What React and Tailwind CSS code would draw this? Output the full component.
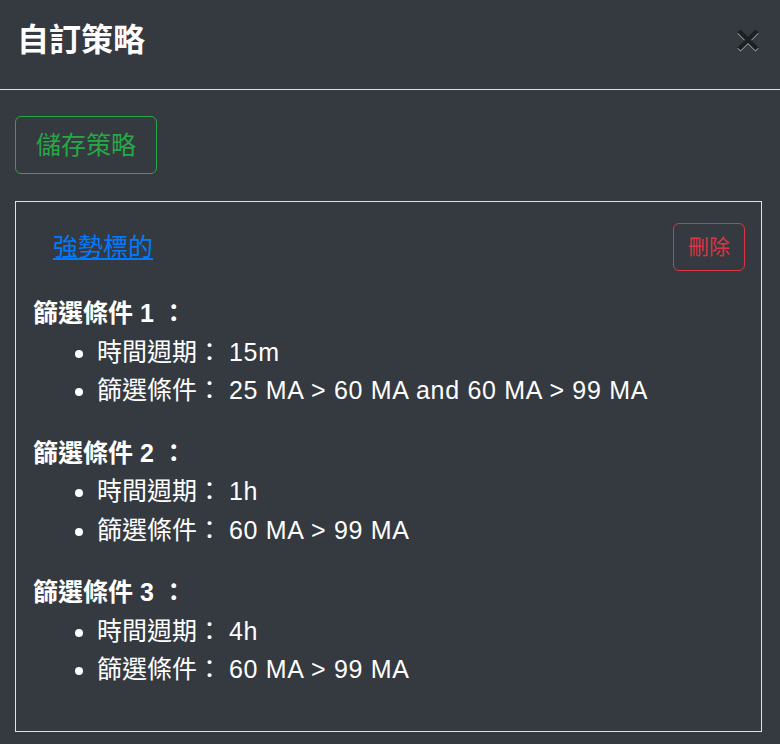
import React from "react";

const font = { fontFamily: '"Liberation Sans", "Noto Sans CJK TC", sans-serif' };

const conditions = [
  { period: "15m", rule: "25 MA > 60 MA and 60 MA > 99 MA" },
  { period: "1h", rule: "60 MA > 99 MA" },
  { period: "4h", rule: "60 MA > 99 MA" },
];

function CloseIcon() {
  return (
    <svg width="24" height="24" viewBox="0 0 24 24" aria-hidden>
      <g stroke="#aeb3b8" strokeWidth="4.5" strokeLinecap="butt">
        <path d="M3 4L21 22M21 4L3 22" />
      </g>
      <g stroke="#1c1f23" strokeWidth="4.5" strokeLinecap="butt">
        <path d="M3 3L21 21M21 3L3 21" />
      </g>
    </svg>
  );
}

export default function App() {
  return (
    <div className="w-[780px] h-[744px] bg-[#343a40] text-white overflow-hidden" style={font}>
      {/* header */}
      <div className="flex items-start justify-between pl-[17px] pr-[20px] pt-[20px] h-[90px] border-b border-[#dee2e6]">
        <h5 className="text-[32px] leading-[40px] font-bold">自訂策略</h5>
        <button className="mt-[8px]">
          <CloseIcon />
        </button>
      </div>

      {/* body */}
      <div className="pt-[26px] pl-[15px] pr-[18px]">
        <button className="border border-[#28a745] text-[#28a745] rounded-[6px] text-[25px] leading-[36px] px-[20px] py-[10px]">
          儲存策略
        </button>

        <div className="mt-[27px] border border-[#dee2e6] pt-[21px] pl-[17px] pr-[16px] pb-[18px]">
          <div className="flex items-center justify-between">
            <a href="#" className="ml-[20px] text-[#007bff] underline text-[25px] leading-[36px]">
              強勢標的
            </a>
            <button className="border border-[#dc3545] text-[#dc3545] rounded-[6px] text-[21px] leading-[30px] px-[14px] py-[8px]">
              刪除
            </button>
          </div>

          <div className="mt-[23px]">
            {conditions.map((c, i) => (
              <div key={i}>
                <div className="text-[25px] leading-[38.5px] font-bold">
                  篩選條件 <span className="tracking-[0.5px]">{i + 1}</span> ：
                </div>
                <ul className="list-disc pl-[64px] mb-[24px] text-[25px] leading-[38.5px]">
                  <li>
                    時間週期： <span className="tracking-[0.7px]">{c.period}</span>
                  </li>
                  <li>
                    篩選條件： <span className="tracking-[0.7px]">{c.rule}</span>
                  </li>
                </ul>
              </div>
            ))}
          </div>
        </div>
      </div>
    </div>
  );
}
